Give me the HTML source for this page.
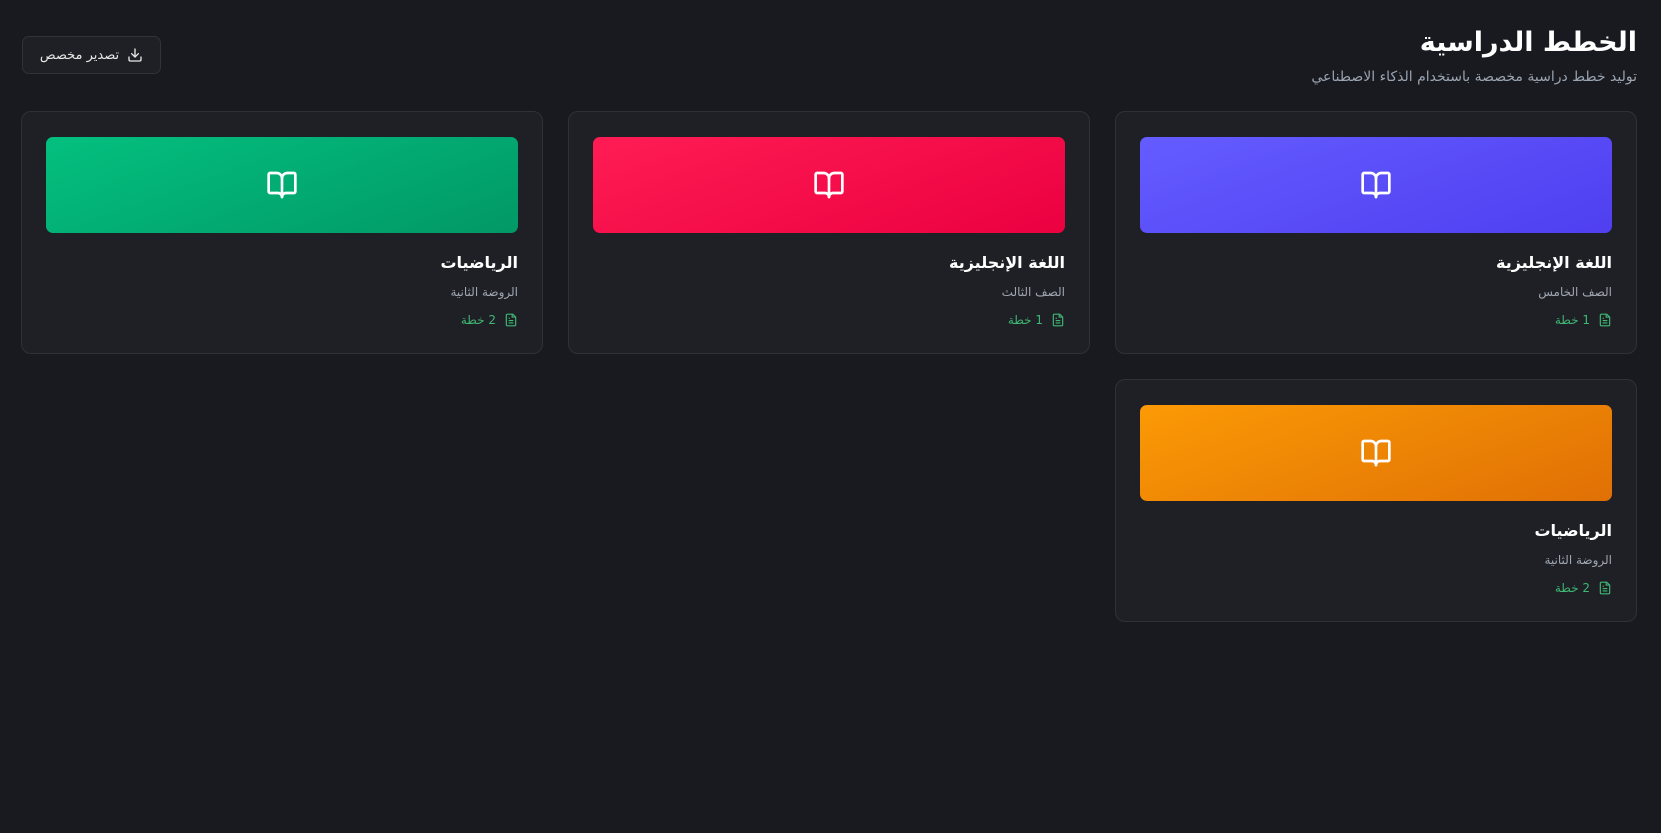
<!DOCTYPE html>
<html dir="rtl" lang="ar"><head><meta charset="utf-8">
<style>
*{box-sizing:border-box;margin:0;padding:0}
body{width:1661px;height:833px;background:#181a1f;font-family:"DejaVu Sans","Liberation Sans",sans-serif;color:#fff;position:relative;overflow:hidden}
h1{position:absolute;right:24px;top:25px;font-size:27px;font-weight:bold;line-height:36px}
.sub{position:absolute;right:24px;top:69px;font-size:14px;color:#9aa3b0}
.btn{position:absolute;left:22px;top:36px;width:139px;height:38px;border:1px solid #30333a;border-radius:7px;background:#1e2025;display:flex;align-items:center;justify-content:center;gap:8px;font-size:13px;color:#e8e8e8}
.card{position:absolute;width:522px;height:243px;background:#1e2025;border:1.5px solid #2e3138;border-radius:10px;padding:25px 24px}
.ban{height:96px;border-radius:7px;display:flex;align-items:center;justify-content:center}
.t{margin-top:19px;font-size:16px;font-weight:bold;line-height:22px}
.s{margin-top:9px;font-size:12px;color:#a0a7b2;line-height:18px}
.c{margin-top:10px;font-size:12px;color:#3fb673;display:flex;align-items:center;gap:8px;line-height:18px}
</style></head><body>
<h1>الخطط الدراسية</h1>
<div class="sub">توليد خطط دراسية مخصصة باستخدام الذكاء الاصطناعي</div>
<div class="btn"><svg width="16" height="16" viewBox="0 0 24 24" fill="none" stroke="#e8e8e8" stroke-width="2" stroke-linecap="round" stroke-linejoin="round"><path d="M21 15v4a2 2 0 0 1-2 2H5a2 2 0 0 1-2-2v-4"/><path d="M7 10l5 5 5-5"/><path d="M12 15V3"/></svg><span>تصدير مخصص</span></div>

<div class="card" style="right:24px;top:111px">
<div class="ban" style="background:linear-gradient(160deg,#645cff,#4f3ff0)"><svg width="32" height="32" viewBox="0 0 24 24" fill="none" stroke="#fff" stroke-width="2" stroke-linecap="round" stroke-linejoin="round"><path d="M12 7v14"/><path d="M3 18a1 1 0 0 1-1-1V4a1 1 0 0 1 1-1h5a4 4 0 0 1 4 4 4 4 0 0 1 4-4h5a1 1 0 0 1 1 1v13a1 1 0 0 1-1 1h-6a3 3 0 0 0-3 3 3 3 0 0 0-3-3z"/></svg></div>
<div class="t">اللغة الإنجليزية</div><div class="s">الصف الخامس</div>
<div class="c"><svg width="14" height="14" viewBox="0 0 24 24" fill="none" stroke="#3fb673" stroke-width="2"><path d="M15 2H6a2 2 0 0 0-2 2v16a2 2 0 0 0 2 2h12a2 2 0 0 0 2-2V7z"/><path d="M14 2v5h5M16 13H8M16 17H8M10 9H8"/></svg><span>1 خطة</span></div></div>

<div class="card" style="right:571px;top:111px">
<div class="ban" style="background:linear-gradient(160deg,#ff1c54,#eb0040)"><svg width="32" height="32" viewBox="0 0 24 24" fill="none" stroke="#fff" stroke-width="2" stroke-linecap="round" stroke-linejoin="round"><path d="M12 7v14"/><path d="M3 18a1 1 0 0 1-1-1V4a1 1 0 0 1 1-1h5a4 4 0 0 1 4 4 4 4 0 0 1 4-4h5a1 1 0 0 1 1 1v13a1 1 0 0 1-1 1h-6a3 3 0 0 0-3 3 3 3 0 0 0-3-3z"/></svg></div>
<div class="t">اللغة الإنجليزية</div><div class="s">الصف الثالث</div>
<div class="c"><svg width="14" height="14" viewBox="0 0 24 24" fill="none" stroke="#3fb673" stroke-width="2"><path d="M15 2H6a2 2 0 0 0-2 2v16a2 2 0 0 0 2 2h12a2 2 0 0 0 2-2V7z"/><path d="M14 2v5h5M16 13H8M16 17H8M10 9H8"/></svg><span>1 خطة</span></div></div>

<div class="card" style="right:1118px;top:111px">
<div class="ban" style="background:linear-gradient(160deg,#03c07f,#029866)"><svg width="32" height="32" viewBox="0 0 24 24" fill="none" stroke="#fff" stroke-width="2" stroke-linecap="round" stroke-linejoin="round"><path d="M12 7v14"/><path d="M3 18a1 1 0 0 1-1-1V4a1 1 0 0 1 1-1h5a4 4 0 0 1 4 4 4 4 0 0 1 4-4h5a1 1 0 0 1 1 1v13a1 1 0 0 1-1 1h-6a3 3 0 0 0-3 3 3 3 0 0 0-3-3z"/></svg></div>
<div class="t">الرياضيات</div><div class="s">الروضة الثانية</div>
<div class="c"><svg width="14" height="14" viewBox="0 0 24 24" fill="none" stroke="#3fb673" stroke-width="2"><path d="M15 2H6a2 2 0 0 0-2 2v16a2 2 0 0 0 2 2h12a2 2 0 0 0 2-2V7z"/><path d="M14 2v5h5M16 13H8M16 17H8M10 9H8"/></svg><span>2 خطة</span></div></div>

<div class="card" style="right:24px;top:379px">
<div class="ban" style="background:linear-gradient(160deg,#fb9a05,#e07005)"><svg width="32" height="32" viewBox="0 0 24 24" fill="none" stroke="#fff" stroke-width="2" stroke-linecap="round" stroke-linejoin="round"><path d="M12 7v14"/><path d="M3 18a1 1 0 0 1-1-1V4a1 1 0 0 1 1-1h5a4 4 0 0 1 4 4 4 4 0 0 1 4-4h5a1 1 0 0 1 1 1v13a1 1 0 0 1-1 1h-6a3 3 0 0 0-3 3 3 3 0 0 0-3-3z"/></svg></div>
<div class="t">الرياضيات</div><div class="s">الروضة الثانية</div>
<div class="c"><svg width="14" height="14" viewBox="0 0 24 24" fill="none" stroke="#3fb673" stroke-width="2"><path d="M15 2H6a2 2 0 0 0-2 2v16a2 2 0 0 0 2 2h12a2 2 0 0 0 2-2V7z"/><path d="M14 2v5h5M16 13H8M16 17H8M10 9H8"/></svg><span>2 خطة</span></div></div>
</body></html>
